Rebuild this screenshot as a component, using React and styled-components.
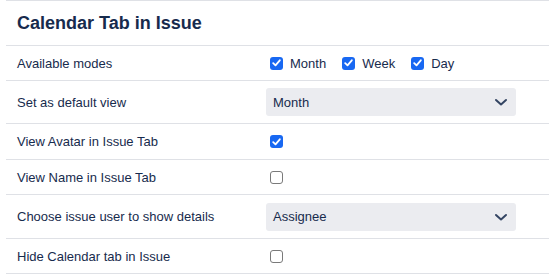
import React from "react";
import styled, { createGlobalStyle } from "styled-components";

const Global = createGlobalStyle`
  html, body { margin: 0; padding: 0; background: #fff; }
  body { font-family: "Liberation Sans", Arial, sans-serif; color: #172b4d; }
`;

const Page = styled.div`
  padding-left: 6px;
`;

const Panel = styled.section`
  border-top: 1px solid #dfe1e6;
`;

const Header = styled.div`
  height: 44px;
  display: flex;
  align-items: center;
  padding-left: 11px;
  border-bottom: 1px solid #dfe1e6;
`;

const Title = styled.h2`
  margin: 0;
  font-size: 18px;
  font-weight: 700;
  color: #172b4d;
`;

const Row = styled.div`
  display: grid;
  grid-template-columns: 260px 1fr;
  align-items: center;
  height: ${(p) => p.$h}px;
  border-bottom: 1px solid #dfe1e6;
`;

const Label = styled.div`
  padding-left: 11px;
  font-size: 13px;
  color: #172b4d;
`;

const Value = styled.div`
  display: flex;
  align-items: center;
`;

const Box = styled.span`
  box-sizing: border-box;
  width: 13px;
  height: 13px;
  margin-left: 4px;
  border-radius: 3px;
  display: inline-flex;
  align-items: center;
  justify-content: center;
  background: ${(p) => (p.$checked ? "#1868f2" : "#fff")};
  border: ${(p) => (p.$checked ? "none" : "1px solid #7a7a7a")};
`;

const Option = styled.label`
  display: inline-flex;
  align-items: center;
  font-size: 13px;
  color: #172b4d;
  margin-right: 12px;
  & > span:last-child { margin-left: 7px; }
`;

const Select = styled.div`
  box-sizing: border-box;
  width: 250px;
  height: 28px;
  border-radius: 3px;
  background: #ebecf0;
  display: flex;
  align-items: center;
  justify-content: space-between;
  padding: 0 8px 0 7px;
  font-size: 13px;
  color: #172b4d;
`;

const Check = () => (
  <svg width="9" height="8" viewBox="0 0 9 8">
    <path d="M1.2 4.2 L3.5 6.4 L7.8 1.3" fill="none" stroke="#fff" strokeWidth="1.8" strokeLinecap="round" strokeLinejoin="round" />
  </svg>
);

const Checkbox = ({ checked }) => (
  <Box $checked={checked}>{checked && <Check />}</Box>
);

const Chevron = () => (
  <svg width="14" height="14" viewBox="0 0 14 14">
    <path d="M2 5 L7 9.5 L12 5" fill="none" stroke="#344563" strokeWidth="2" strokeLinecap="round" strokeLinejoin="round" />
  </svg>
);

export default function App() {
  return (
    <Page>
      <Global />
      <Panel>
        <Header>
          <Title>Calendar Tab in Issue</Title>
        </Header>
        <Row $h={34}>
          <Label>Available modes</Label>
          <Value>
            {["Month", "Week", "Day"].map((m) => (
              <Option key={m}>
                <Checkbox checked />
                <span>{m}</span>
              </Option>
            ))}
          </Value>
        </Row>
        <Row $h={42}>
          <Label>Set as default view</Label>
          <Value>
            <Select>
              <span>Month</span>
              <Chevron />
            </Select>
          </Value>
        </Row>
        <Row $h={35}>
          <Label>View Avatar in Issue Tab</Label>
          <Value>
            <Checkbox checked />
          </Value>
        </Row>
        <Row $h={34}>
          <Label>View Name in Issue Tab</Label>
          <Value>
            <Checkbox />
          </Value>
        </Row>
        <Row $h={43}>
          <Label>Choose issue user to show details</Label>
          <Value>
            <Select>
              <span>Assignee</span>
              <Chevron />
            </Select>
          </Value>
        </Row>
        <Row $h={34}>
          <Label>Hide Calendar tab in Issue</Label>
          <Value>
            <Checkbox />
          </Value>
        </Row>
      </Panel>
    </Page>
  );
}
